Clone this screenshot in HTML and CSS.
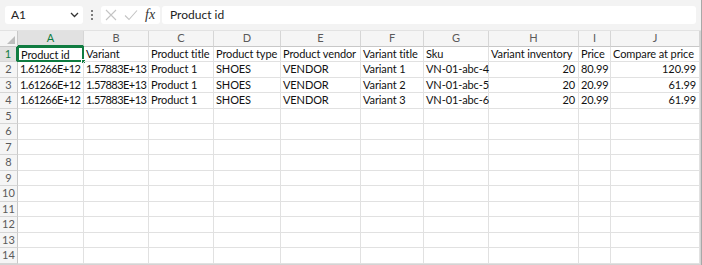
FILE: index.html
```html
<!DOCTYPE html>
<html>
<head>
<meta charset="utf-8">
<link rel="stylesheet" href="styles.css">
</head>
<body>
<div class="app">
  <div class="fbar">
    <div class="namebox">
      <span class="nb-text">A1</span>
      <svg class="chev" width="9" height="6" viewBox="0 0 9 6"><path d="M1 1 L4.5 4.5 L8 1" fill="none" stroke="#333" stroke-width="1.3"/></svg>
    </div>
    <div class="dots"><span></span><span></span><span></span></div>
    <div class="fxbox">
      <svg width="12" height="12" viewBox="0 0 12 12"><path d="M1 1 L11 11 M11 1 L1 11" stroke="#c4c4c4" stroke-width="1.1" fill="none"/></svg>
      <svg width="14" height="12" viewBox="0 0 14 12"><path d="M1 6.5 L5 10.5 L13 1.5" stroke="#c4c4c4" stroke-width="1.1" fill="none"/></svg>
      <span class="fx">fx</span>
    </div>
    <div class="finput">Product id</div>
  </div>
  <div class="sheet">
    <div class="c corner"><svg width="8" height="8" viewBox="0 0 8 8"><path d="M8 0 L8 8 L0 8 Z" fill="#bdbdbd"/></svg></div>
    <div class="c ch sel">A</div><div class="c ch">B</div><div class="c ch">C</div><div class="c ch">D</div><div class="c ch">E</div><div class="c ch">F</div><div class="c ch">G</div><div class="c ch">H</div><div class="c ch">I</div><div class="c ch">J</div>

    <div class="c rh sel">1</div><div class="c active">Product id<i class="handle"></i></div><div class="c">Variant</div><div class="c">Product title</div><div class="c">Product type</div><div class="c">Product vendor</div><div class="c">Variant title</div><div class="c">Sku</div><div class="c">Variant inventory</div><div class="c">Price</div><div class="c">Compare at price</div>

    <div class="c rh">2</div><div class="c n e">1.61266E+12</div><div class="c n e">1.57883E+13</div><div class="c">Product 1</div><div class="c">SHOES</div><div class="c">VENDOR</div><div class="c">Variant 1</div><div class="c">VN-01-abc-4</div><div class="c n">20</div><div class="c n">80.99</div><div class="c n">120.99</div>

    <div class="c rh">3</div><div class="c n e">1.61266E+12</div><div class="c n e">1.57883E+13</div><div class="c">Product 1</div><div class="c">SHOES</div><div class="c">VENDOR</div><div class="c">Variant 2</div><div class="c">VN-01-abc-5</div><div class="c n">20</div><div class="c n">20.99</div><div class="c n">61.99</div>

    <div class="c rh">4</div><div class="c n e">1.61266E+12</div><div class="c n e">1.57883E+13</div><div class="c">Product 1</div><div class="c">SHOES</div><div class="c">VENDOR</div><div class="c">Variant 3</div><div class="c">VN-01-abc-6</div><div class="c n">20</div><div class="c n">20.99</div><div class="c n">61.99</div>

    <div class="c rh">5</div><div class="c"></div><div class="c"></div><div class="c"></div><div class="c"></div><div class="c"></div><div class="c"></div><div class="c"></div><div class="c"></div><div class="c"></div><div class="c"></div>
    <div class="c rh">6</div><div class="c"></div><div class="c"></div><div class="c"></div><div class="c"></div><div class="c"></div><div class="c"></div><div class="c"></div><div class="c"></div><div class="c"></div><div class="c"></div>
    <div class="c rh">7</div><div class="c"></div><div class="c"></div><div class="c"></div><div class="c"></div><div class="c"></div><div class="c"></div><div class="c"></div><div class="c"></div><div class="c"></div><div class="c"></div>
    <div class="c rh">8</div><div class="c"></div><div class="c"></div><div class="c"></div><div class="c"></div><div class="c"></div><div class="c"></div><div class="c"></div><div class="c"></div><div class="c"></div><div class="c"></div>
    <div class="c rh">9</div><div class="c"></div><div class="c"></div><div class="c"></div><div class="c"></div><div class="c"></div><div class="c"></div><div class="c"></div><div class="c"></div><div class="c"></div><div class="c"></div>
    <div class="c rh">10</div><div class="c"></div><div class="c"></div><div class="c"></div><div class="c"></div><div class="c"></div><div class="c"></div><div class="c"></div><div class="c"></div><div class="c"></div><div class="c"></div>
    <div class="c rh">11</div><div class="c"></div><div class="c"></div><div class="c"></div><div class="c"></div><div class="c"></div><div class="c"></div><div class="c"></div><div class="c"></div><div class="c"></div><div class="c"></div>
    <div class="c rh">12</div><div class="c"></div><div class="c"></div><div class="c"></div><div class="c"></div><div class="c"></div><div class="c"></div><div class="c"></div><div class="c"></div><div class="c"></div><div class="c"></div>
    <div class="c rh">13</div><div class="c"></div><div class="c"></div><div class="c"></div><div class="c"></div><div class="c"></div><div class="c"></div><div class="c"></div><div class="c"></div><div class="c"></div><div class="c"></div>
    <div class="c rh">14</div><div class="c"></div><div class="c"></div><div class="c"></div><div class="c"></div><div class="c"></div><div class="c"></div><div class="c"></div><div class="c"></div><div class="c"></div><div class="c"></div>
  </div>
</div>
</body>
</html>
```
FILE: styles.css
```css
* { box-sizing: border-box; }
html, body { margin: 0; padding: 0; background: #fff; }
.app {
  width: 702px;
  height: 265px;
  overflow: hidden;
  background: #d4d4d4;
  font-family: "Lato", "Liberation Sans", sans-serif;
  color: #111;
  border-right: 1px solid #a8a8a8;
}
.fbar {
  height: 31px;
  background: #f3f3f3;
  display: flex;
  align-items: center;
  padding: 0 5px 1px 5px;
  border-bottom: 1px solid #e2e2e2;
}
.namebox {
  width: 78px;
  height: 18px;
  background: #fff;
  border-radius: 3px;
  display: flex;
  align-items: center;
  justify-content: space-between;
  padding: 0 4px 0 6px;
  font-size: 12px;
  color: #222;
}
.dots {
  width: 18px;
  display: flex;
  flex-direction: column;
  align-items: center;
  gap: 2px;
}
.dots span { width: 2px; height: 2px; background: #555; border-radius: 1px; }
.fxbox {
  width: 59px;
  height: 18px;
  background: #fff;
  border-radius: 3px;
  display: flex;
  align-items: center;
  gap: 7px;
  padding-left: 4px;
}
.fx {
  font-family: "Liberation Serif", "DejaVu Serif", serif;
  font-style: italic;
  font-size: 14px;
  color: #333;
}
.finput {
  flex: 1;
  height: 18px;
  margin-left: 2px;
  background: #fff;
  border-radius: 3px;
  font-size: 12px;
  line-height: 18px;
  padding-left: 8px;
  color: #222;
}
.sheet {
  display: grid;
  grid-template-columns: 18px 66px 65px 65px 67px 80px 63px 65px 90px 32px 89px;
  grid-auto-rows: 15.5px;
  background: #fff;
  width: 700px;
}
.c {
  position: relative;
  border-right: 1px solid #e1e1e1;
  border-bottom: 1px solid #e1e1e1;
  font-size: 11px;
  letter-spacing: -0.1px;
  line-height: 14px;
  padding: 0 2px;
  white-space: nowrap;
  overflow: visible;
}
.n { text-align: right; padding-right: 3px; }
.e { letter-spacing: -0.55px; padding-right: 3px; }
.ch, .rh, .corner {
  background: #f5f5f5;
  color: #5a5a5a;
  text-align: center;
  font-size: 11px;
  letter-spacing: 0;
  border-color: #d6d6d6;
}
.ch { border-bottom: 1px solid #c8c8c8; }
.rh { border-right: 1px solid #c8c8c8; padding: 0; }
.corner { border-right: 1px solid #c8c8c8; border-bottom: 1px solid #c8c8c8; display: flex; align-items: flex-end; justify-content: flex-end; padding: 0 2px 2px 0; }
.ch.sel { background: #e1e1e1; color: #107c41; border-bottom: 2px solid #107c41; }
.rh.sel { background: #e1e1e1; color: #107c41; border-right: 2px solid #107c41; }
.active {
  border: 2px solid #107c41;
  margin: -1px 0 0 -1px;
  padding-left: 2px;
  line-height: 13px;
}
.handle {
  position: absolute;
  right: -4px;
  bottom: -4px;
  width: 5px;
  height: 5px;
  background: #107c41;
  border: 1px solid #fff;
}
```
